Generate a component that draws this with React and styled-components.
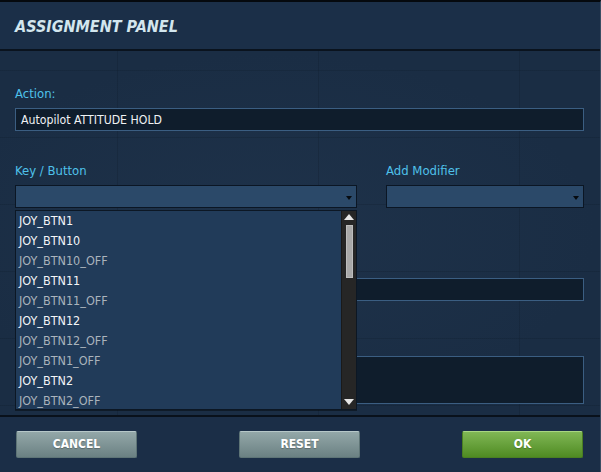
import React from "react";
import styled, { createGlobalStyle } from "styled-components";

const GlobalStyle = createGlobalStyle`
  html, body {
    margin: 0;
    padding: 0;
    background: #05090e;
  }
  * {
    box-sizing: border-box;
  }
`;

const keyOptions = [
  { name: "JOY_BTN1", on: true },
  { name: "JOY_BTN10", on: true },
  { name: "JOY_BTN10_OFF", on: false },
  { name: "JOY_BTN11", on: true },
  { name: "JOY_BTN11_OFF", on: false },
  { name: "JOY_BTN12", on: true },
  { name: "JOY_BTN12_OFF", on: false },
  { name: "JOY_BTN1_OFF", on: false },
  { name: "JOY_BTN2", on: true },
  { name: "JOY_BTN2_OFF", on: false },
];

export default function App() {
  return (
    <>
      <GlobalStyle />
      <Panel>
        <Header>
          <Title>ASSIGNMENT PANEL</Title>
        </Header>
        <Body>
          <Field $top={35}>
            <Label>Action:</Label>
            <TextBox>Autopilot ATTITUDE HOLD</TextBox>
          </Field>

          <Columns $top={32}>
            <KeyColumn>
              <Label>Key / Button</Label>
              <Select>
                <Caret />
              </Select>
              <DropList>
                <Options>
                  {keyOptions.map((o) => (
                    <Option key={o.name} $on={o.on}>
                      {o.name}
                    </Option>
                  ))}
                </Options>
                <ScrollBar>
                  <ScrollArrow $up />
                  <Thumb />
                  <ScrollTrack />
                  <ScrollArrow />
                </ScrollBar>
              </DropList>
            </KeyColumn>
            <div>
              <Label>Add Modifier</Label>
              <Select>
                <Caret />
              </Select>
            </div>
          </Columns>

          <Field $top={48}>
            <Label />
            <TextBox />
          </Field>

          <Field $top={33}>
            <Label />
            <TextBox $tall />
          </Field>
        </Body>
        <Footer>
          <Button>CANCEL</Button>
          <Button>RESET</Button>
          <Button $ok>OK</Button>
        </Footer>
      </Panel>
    </>
  );
}

const Panel = styled.div`
  width: 601px;
  height: 472px;
  display: flex;
  flex-direction: column;
  border-top: 2px solid #05090e;
  border-right: 1px solid #3a4d63;
  background: #1a2d44;
  font-family: "DejaVu Sans Condensed", "DejaVu Sans", sans-serif;
  font-stretch: condensed;
  overflow: hidden;
`;

const Header = styled.div`
  height: 49px;
  flex: none;
  display: flex;
  align-items: center;
  padding: 2px 15px 0;
  background: #1b2f48;
  border-bottom: 2px solid #0a131e;
`;

const Title = styled.h1`
  margin: 0;
  font-size: 16px;
  font-weight: bold;
  font-style: italic;
  color: #d3e6ee;
`;

const Body = styled.div`
  height: 364px;
  flex: none;
  padding: 0 16px 0 15px;
  background-color: #1a2d44;
  background-image:
    linear-gradient(to right, rgba(12, 24, 38, 0.22) 1px, transparent 1px),
    linear-gradient(to bottom, rgba(12, 24, 38, 0.22) 1px, transparent 1px),
    radial-gradient(ellipse at 45% 50%, rgba(40, 62, 88, 0.3), transparent 70%);
  background-size: 201px 67px, 201px 67px, 100% 100%;
  background-position: 117px 0, 0 19px, 0 0;
`;

const Field = styled.div`
  margin-top: ${(p) => p.$top}px;
`;

const Columns = styled.div`
  margin-top: ${(p) => p.$top}px;
  display: grid;
  grid-template-columns: 342px 1fr;
  column-gap: 29px;
`;

const KeyColumn = styled.div`
  position: relative;
  z-index: 2;
`;

const Label = styled.div`
  height: 16px;
  margin-bottom: 6px;
  font-size: 13px;
  line-height: 16px;
  color: #4fc1ea;
`;

const TextBox = styled.div`
  height: ${(p) => (p.$tall ? 48 : 23)}px;
  padding: 0 5px;
  display: flex;
  align-items: ${(p) => (p.$tall ? "flex-start" : "center")};
  background: #0f1d2c;
  border: 1px solid #3b5e82;
  color: #f0f2f4;
  font-size: 12.2px;
`;

const Select = styled.div`
  position: relative;
  height: 23px;
  background: #2b4969;
  border: 1px solid #0b1624;
`;

const Caret = styled.span`
  position: absolute;
  right: 4px;
  top: 10px;
  width: 0;
  height: 0;
  border-left: 3.5px solid transparent;
  border-right: 3.5px solid transparent;
  border-top: 4px solid #070b10;
`;

const DropList = styled.div`
  position: absolute;
  left: 0;
  right: 0;
  top: calc(100% + 2px);
  height: 200px;
  display: flex;
  background: #213b59;
  border: 1px solid #0c1724;
  box-shadow: 0 1px 0 rgba(0, 0, 0, 0.4);
`;

const Options = styled.div`
  flex: 1;
  padding-left: 3px;
`;

const Option = styled.div`
  height: 20px;
  line-height: 20px;
  font-size: 12.5px;
  color: ${(p) => (p.$on ? "#f4f6f8" : "#aab3bc")};
  white-space: nowrap;
`;

const ScrollBar = styled.div`
  width: 15px;
  display: flex;
  flex-direction: column;
  align-items: center;
  padding: 3px 0 4px;
  background: #262626;
  border-left: 1px solid #1a1a1a;
`;

const ScrollArrow = styled.span`
  flex: none;
  width: 0;
  height: 0;
  border-left: 5.5px solid transparent;
  border-right: 5.5px solid transparent;
  ${(p) =>
    p.$up
      ? "border-bottom: 6px solid #e6e6e6;"
      : "border-top: 6px solid #e6e6e6;"}
`;

const Thumb = styled.span`
  flex: none;
  width: 7px;
  height: 53px;
  margin-top: 5px;
  background: #a9a9a9;
  border: 1px solid #bdbdbd;
`;

const ScrollTrack = styled.span`
  flex: 1;
`;

const Footer = styled.div`
  height: 55px;
  flex: none;
  display: flex;
  align-items: center;
  justify-content: space-between;
  padding: 0 17px 0 16px;
  background: #1b2e47;
  border-top: 2px solid #09111b;
`;

const Button = styled.button`
  width: 121px;
  height: 27px;
  margin-top: 1px;
  border-radius: 2px;
  border: 1px solid ${(p) => (p.$ok ? "#4a7f22" : "#5e7476")};
  border-top-color: ${(p) => (p.$ok ? "#a9d682" : "#b6c7c8")};
  background: ${(p) =>
    p.$ok
      ? "linear-gradient(#80b755, #4f8b22)"
      : "linear-gradient(#93a7a8, #6b8183)"};
  color: #ffffff;
  font-family: "DejaVu Sans Condensed", "DejaVu Sans", sans-serif;
  font-stretch: condensed;
  font-size: 12px;
  font-weight: bold;
  text-shadow: 0 1px 1px rgba(0, 0, 0, 0.25);
  padding: 0;
`;
